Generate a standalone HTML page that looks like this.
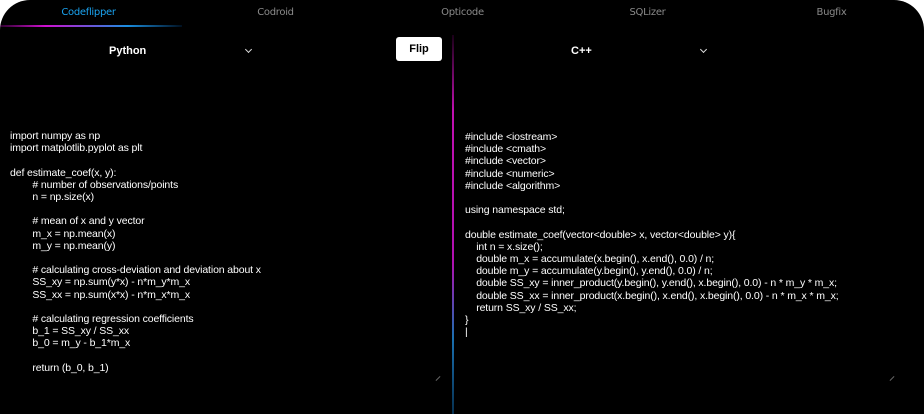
<!DOCTYPE html>
<html><head><style>
*{margin:0;padding:0;box-sizing:border-box}
html,body{width:924px;height:414px;background:#fff;overflow:hidden}
.app{position:absolute;left:0;top:0;width:924px;height:414px;background:#000;border-radius:30px 30px 0 0;overflow:hidden;font-family:"Liberation Sans",Arial,sans-serif}
.tab{position:absolute;top:7px;width:185px;text-align:center;font-size:10px;color:#8a8a8a;font-family:"DejaVu Sans",sans-serif;letter-spacing:-0.3px}
.tab.act{color:#1aa3f0}
.ul{position:absolute;left:0;top:25px;width:182px;height:2px;background:linear-gradient(90deg,rgba(160,0,160,0.3),#d010d0 25%,#1a8ee0 70%,rgba(0,80,160,0.2))}
.title{position:absolute;top:45px;font-size:11px;font-weight:bold;color:#fff}
.chev{position:absolute;top:47px;width:5px;height:5px;border-right:1.4px solid #ddd;border-bottom:1.4px solid #ddd;transform:rotate(45deg)}
.flip{position:absolute;left:396px;top:37px;width:46px;height:24px;background:#fff;border-radius:3px;color:#000;font-size:11px;font-weight:bold;text-align:center;line-height:24px}
.div{position:absolute;left:452px;top:35px;width:2px;height:379px;background:linear-gradient(180deg,#1a0018,#c010b0 20%,#b010b0 60%,#1a70b0 80%,#063050)}
pre{position:absolute;font-family:"Liberation Sans",Arial,sans-serif;font-size:10.5px;letter-spacing:-0.12px;line-height:12.2px;color:#fff;white-space:pre}
.rh{position:absolute;width:6px;height:1px;background:#666;transform:rotate(-45deg)}
</style></head><body><div class="app">
<div class="tab act" style="left:-4px">Codeflipper</div>
<div class="tab" style="left:183px">Codroid</div>
<div class="tab" style="left:370px">Opticode</div>
<div class="tab" style="left:555px">SQLizer</div>
<div class="tab" style="left:739px">Bugfix</div>
<div class="ul"></div>
<div class="title" style="left:109px">Python</div>
<div class="chev" style="left:246px"></div>
<div class="flip">Flip</div>
<div class="div"></div>
<div class="title" style="left:571px">C++</div>
<div class="chev" style="left:701px"></div>
<pre style="left:10px;top:130px">import numpy as np
import matplotlib.pyplot as plt

def estimate_coef(x, y):
        # number of observations/points
        n = np.size(x)

        # mean of x and y vector
        m_x = np.mean(x)
        m_y = np.mean(y)

        # calculating cross-deviation and deviation about x
        SS_xy = np.sum(y*x) - n*m_y*m_x
        SS_xx = np.sum(x*x) - n*m_x*m_x

        # calculating regression coefficients
        b_1 = SS_xy / SS_xx
        b_0 = m_y - b_1*m_x

        return (b_0, b_1)</pre>
<pre style="left:465px;top:131px">#include &lt;iostream&gt;
#include &lt;cmath&gt;
#include &lt;vector&gt;
#include &lt;numeric&gt;
#include &lt;algorithm&gt;

using namespace std;

double estimate_coef(vector&lt;double&gt; x, vector&lt;double&gt; y){
    int n = x.size();
    double m_x = accumulate(x.begin(), x.end(), 0.0) / n;
    double m_y = accumulate(y.begin(), y.end(), 0.0) / n;
    double SS_xy = inner_product(y.begin(), y.end(), x.begin(), 0.0) - n * m_y * m_x;
    double SS_xx = inner_product(x.begin(), x.end(), x.begin(), 0.0) - n * m_x * m_x;
    return SS_xy / SS_xx;
}
|</pre>
<div class="rh" style="left:435px;top:378px"></div>
<div class="rh" style="left:889px;top:378px"></div>
</div></body></html>
